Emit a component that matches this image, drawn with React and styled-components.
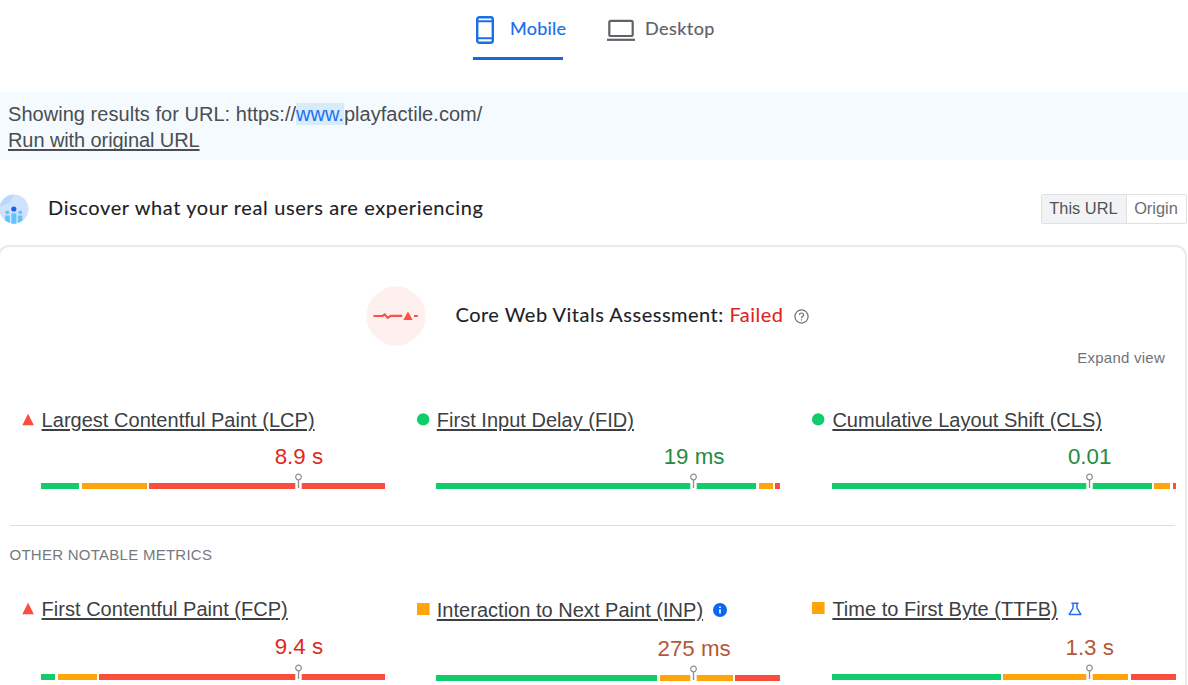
import React from "react";
import styled, { createGlobalStyle } from "styled-components";

const GREEN = "#10cc6b";
const ORANGE = "#ffa40a";
const RED = "#fb4c40";

const GlobalStyle = createGlobalStyle`
  * { box-sizing: border-box; }
  html, body { margin: 0; background: #fff; overflow: hidden; }
  body { font-family: "Liberation Sans", Arial, sans-serif; color: #3c4043; }
`;

const Page = styled.div`
  width: 1188px;
  height: 685px;
  overflow: hidden;
  display: flex;
  flex-direction: column;
`;

const Tabs = styled.nav`
  height: 60px;
  flex: none;
  display: flex;
  padding-left: 473px;
  gap: 44px;
`;

const Tab = styled.div`
  display: flex;
  align-items: center;
  height: 60px;
  width: ${(p) => p.$width}px;
  gap: ${(p) => p.$gap}px;
  white-space: nowrap;
  padding-bottom: ${(p) => (p.$active ? 0 : 3)}px;
  color: ${(p) => (p.$active ? "#1a6fe8" : "#5f6368")};
  border-bottom: ${(p) => (p.$active ? "3px solid #1967e0" : "none")};
  svg { flex: none; margin-top: 3px; }
`;

const TabLabel = styled.span`
  font: 400 18px/24px Lato, sans-serif;
  letter-spacing: ${(p) => p.$spacing}px;
  margin-top: -1px;
  -webkit-text-stroke: 0.2px currentColor;
`;

const Banner = styled.section`
  margin-top: 32px;
  height: 68px;
  flex: none;
  padding: 9px 8px 0;
  background: #f4fafe;
  font-size: 20px;
  line-height: 26px;
  color: #4a4e52;
`;

const Address = styled.div`
  letter-spacing: 0.04px;
`;

const Highlight = styled.mark`
  background: #d8ebfb;
  color: #1a73f0;
  letter-spacing: 0;
`;

const PlainLink = styled.a`
  display: block;
  width: max-content;
  letter-spacing: -0.09px;
  text-decoration: underline;
  text-decoration-thickness: 2px;
  text-underline-offset: 2px;
  text-decoration-skip-ink: none;
`;

const FieldHeader = styled.header`
  margin-top: 32px;
  height: 34px;
  flex: none;
  display: flex;
  align-items: center;
  padding-right: 1px;
`;

const Heading = styled.h2`
  margin: 0;
  font: 400 20px/28px Lato, sans-serif;
  letter-spacing: ${(p) => p.$spacing}px;
  -webkit-text-stroke: 0.1px currentColor;
  color: #202124;
  white-space: nowrap;
`;

const FieldTitle = styled(Heading)`
  margin: -4px 0 0 19px;
  flex: 1;
`;

const Toggle = styled.div`
  display: flex;
  height: 30px;
  border: 1px solid #dfe1e3;
  border-radius: 2px;
  overflow: hidden;
`;

const ToggleButton = styled.button`
  width: ${(p) => p.$width}px;
  padding: 0 1px 2px 0;
  border: 0;
  border-right: ${(p) => (p.$active ? "1px solid #dfe1e3" : "0")};
  background: ${(p) => (p.$active ? "#f1f3f4" : "#fff")};
  color: ${(p) => (p.$active ? "#4f5357" : "#6a6e73")};
  font: 16.4px/26px "Liberation Sans", Arial, sans-serif;
  white-space: nowrap;
`;

const Card = styled.main`
  margin: 19px 1px 0 -2px;
  height: 500px;
  flex: none;
  border: 2px solid #e9eaeb;
  border-radius: 11px;
  display: flex;
  flex-direction: column;
`;

const Assessment = styled.div`
  height: 60px;
  margin-top: 39px;
  flex: none;
  display: flex;
  align-items: center;
  padding-left: 366px;
`;

const AssessmentTitle = styled(Heading)`
  margin: -4px 10px 0 29.5px;
`;

const Failed = styled.span`
  color: #e0251c;
`;

const ExpandRow = styled.div`
  flex: none;
  display: flex;
  justify-content: flex-end;
  padding-right: 20px;
  font-size: 15px;
  line-height: 24px;
  letter-spacing: 0.25px;
  color: #6f7377;
`;

const Metrics = styled.div`
  display: grid;
  grid-template-columns: 395.2px 395.6px 380px;
  padding-left: 21.6px;
  flex: none;
`;

const Metric = styled.div`
  display: flex;
  flex-direction: column;
  padding-top: ${(p) => p.$shift || 0}px;
`;

const MetricTitle = styled.div`
  display: flex;
  align-items: center;
  height: 26px;
  font-size: 20px;
  line-height: 26px;
  white-space: nowrap;
  svg { flex: none; }
`;

const StatusIcon = styled.svg`
  width: 13px;
  height: 13px;
  margin: -2px 7px 0 0;
`;

const MetricName = styled.a`
  letter-spacing: 0.02px;
  text-decoration: underline;
  text-decoration-thickness: 1.5px;
  text-underline-offset: 2px;
  margin-right: 10px;
`;

const Distribution = styled.div`
  width: 344px;
  margin-left: 19.6px;
`;

const Value = styled.div`
  width: 100px;
  margin-left: 207.7px;
  padding-top: ${(p) => p.$drop}px;
  text-align: center;
  font-size: 22.3px;
  line-height: 26px;
  white-space: nowrap;
  color: ${(p) => p.$color};
`;

const Bar = styled.div`
  position: relative;
  height: 6px;
  margin-top: ${(p) => p.$gap}px;
  display: flex;
  gap: 2.5px;
`;

const Segment = styled.div`
  flex: ${(p) => p.$share} 0 0;
  background: ${(p) => p.$color};
`;

const Pin = styled.svg`
  position: absolute;
  left: 254px;
  top: -10px;
  width: 7px;
  height: 16px;
`;

const Divider = styled.hr`
  margin: 36px 10px 0;
  border: 0;
  height: 1px;
  flex: none;
  background: #dcdee0;
`;

const SectionLabel = styled.h3`
  margin: 17px 0 0 9.5px;
  flex: none;
  font-size: 15px;
  font-weight: 400;
  line-height: 24px;
  letter-spacing: 0.26px;
  color: #75797d;
`;

const FirstRow = styled(Metrics)`
  margin-top: 37px;
`;

const SecondRow = styled(Metrics)`
  margin-top: 29px;
`;

function MobileIcon() {
  return (
    <svg width="24" height="30" viewBox="0 0 24 30" fill="none" stroke="currentColor">
      <rect x="4.2" y="2.2" width="15.6" height="25.6" rx="2.2" strokeWidth="2.4" />
      <path d="M4 6.2h16M4 23.2h16" strokeWidth="2" />
    </svg>
  );
}

function DesktopIcon() {
  return (
    <svg width="28" height="24" viewBox="0 0 28 24" fill="none" stroke="currentColor">
      <rect x="2.3" y="2.8" width="23.4" height="15.2" rx="1.6" strokeWidth="2.2" />
      <path d="M0 21.8h28" strokeWidth="2.2" />
    </svg>
  );
}

function UsersIcon() {
  return (
    <svg width="29" height="32" viewBox="0 0 29 32">
      <circle cx="14" cy="16" r="14.6" fill="#cfe3fc" />
      <path d="M0 12C2 5 8 1.4 14 1.4C11 9 6 12 0 13z" fill="#b9d8fb" />
      <g fill="#62c3fa">
        <circle cx="7.3" cy="19.3" r="1.9" />
        <circle cx="20.2" cy="19.3" r="1.9" />
        <path d="M5.2 22.6h4.6v7.4l-4.6-2.2zM11.4 20.3h4.9v10.4h-4.9zM17.9 22.6h4.5v5.2L17.9 30z" />
      </g>
      <circle cx="13.8" cy="16" r="2.6" fill="#1765e5" />
    </svg>
  );
}

function PulseIcon() {
  return (
    <svg width="60" height="60" viewBox="0 0 60 60">
      <circle cx="30" cy="30" r="29.5" fill="#fef0ef" />
      <path d="M7.5 30h9l2.2-1.6 3 3.5 3-2h11.5M48 30h3.8" fill="none" stroke="#fb5145" strokeWidth="2.2" />
      <path d="M37.3 34l4.7-8.4 4.7 8.4z" fill="#fb5145" />
    </svg>
  );
}

function HelpIcon() {
  return (
    <svg width="15" height="15" viewBox="0 0 15 15" fill="none" stroke="#6b6f73" strokeWidth="1.2">
      <circle cx="7.5" cy="7.5" r="6.6" />
      <path d="M5.5 6c0-2.7 4.1-2.7 4.1 0 0 1.5-2.1 1.6-2.1 3.2M7.5 10.2v1.4" />
    </svg>
  );
}

function InfoIcon() {
  return (
    <svg width="14" height="14" viewBox="0 0 14 14">
      <circle cx="7" cy="7" r="7" fill="#0b66f5" />
      <path d="M7 6.2v4.2M7 3.4v1.5" stroke="#fff" strokeWidth="1.6" />
    </svg>
  );
}

function FlaskIcon() {
  return (
    <svg width="14" height="14" viewBox="0 0 14 14" fill="none" stroke="#246fef" strokeWidth="1.5">
      <path d="M3.4 1.2h7.2M5 1.2v5L1.2 12.4h11.6L9 6.2v-5" strokeLinejoin="round" />
    </svg>
  );
}

function Status({ kind }) {
  return (
    <StatusIcon viewBox="0 0 13 13">
      {kind === "poor" && <path d="M0.3 12.2L6.1 0.8l5.8 11.4z" fill={RED} />}
      {kind === "good" && <circle cx="6.2" cy="6.4" r="6.2" fill={GREEN} />}
      {kind === "average" && <rect width="12.6" height="12" fill={ORANGE} />}
    </StatusIcon>
  );
}

function MetricItem({ kind, name, value, color, shares, shift, drop = 11, gap = 13, badge }) {
  const colors = [GREEN, ORANGE, RED];
  return (
    <Metric $shift={shift}>
      <MetricTitle>
        <Status kind={kind} />
        <MetricName>{name}</MetricName>
        {badge}
      </MetricTitle>
      <Distribution>
        <Value $color={color} $drop={drop}>{value}</Value>
        <Bar $gap={gap}>
          {shares.map((share, i) => (
            <Segment key={colors[i]} $share={share} $color={colors[i]} />
          ))}
          <Pin viewBox="0 0 7 16">
            <rect x="0.3" y="9" width="6.4" height="7" fill="#fff" />
            <path d="M3.5 7v8" stroke="#8b8f94" strokeWidth="1.3" />
            <circle cx="3.5" cy="4" r="2.8" fill="#fff" stroke="#8b8f94" strokeWidth="1.2" />
          </Pin>
        </Bar>
      </Distribution>
    </Metric>
  );
}

export default function App() {
  return (
    <Page>
      <GlobalStyle />
      <Tabs>
        <Tab $active $width={90} $gap={13}>
          <MobileIcon />
          <TabLabel $spacing={0.25}>Mobile</TabLabel>
        </Tab>
        <Tab $width={120} $gap={10}>
          <DesktopIcon />
          <TabLabel $spacing={0.45}>Desktop</TabLabel>
        </Tab>
      </Tabs>
      <Banner>
        <Address>
          Showing results for URL: https://<Highlight>www.</Highlight>playfactile.com/
        </Address>
        <PlainLink>Run with original URL</PlainLink>
      </Banner>
      <FieldHeader>
        <UsersIcon />
        <FieldTitle $spacing={0.62}>Discover what your real users are experiencing</FieldTitle>
        <Toggle>
          <ToggleButton $active $width={85}>This URL</ToggleButton>
          <ToggleButton $width={59}>Origin</ToggleButton>
        </Toggle>
      </FieldHeader>
      <Card>
        <Assessment>
          <PulseIcon />
          <AssessmentTitle $spacing={0.5}>
            Core Web Vitals Assessment: <Failed>Failed</Failed>
          </AssessmentTitle>
          <HelpIcon />
        </Assessment>
        <ExpandRow>Expand view</ExpandRow>
        <FirstRow>
          <MetricItem kind="poor" name="Largest Contentful Paint (LCP)" value="8.9 s" color="#dc2a22" shares={[38, 65, 236]} />
          <MetricItem kind="good" name="First Input Delay (FID)" value="19 ms" color="#268a42" shares={[320, 14, 5]} />
          <MetricItem kind="good" name="Cumulative Layout Shift (CLS)" value="0.01" color="#268a42" shares={[320, 16, 3]} />
        </FirstRow>
        <Divider />
        <SectionLabel>OTHER NOTABLE METRICS</SectionLabel>
        <SecondRow>
          <MetricItem kind="poor" name="First Contentful Paint (FCP)" value="9.4 s" color="#dc2a22" shares={[14, 39, 286]} drop={12} gap={14} />
          <MetricItem kind="average" name="Interaction to Next Paint (INP)" value="275 ms" color="#b2593a" shares={[221, 73, 45]} shift={1} drop={13} badge={<InfoIcon />} />
          <MetricItem kind="average" name="Time to First Byte (TTFB)" value="1.3 s" color="#b2593a" shares={[169, 125, 45]} drop={13} badge={<FlaskIcon />} />
        </SecondRow>
      </Card>
    </Page>
  );
}
